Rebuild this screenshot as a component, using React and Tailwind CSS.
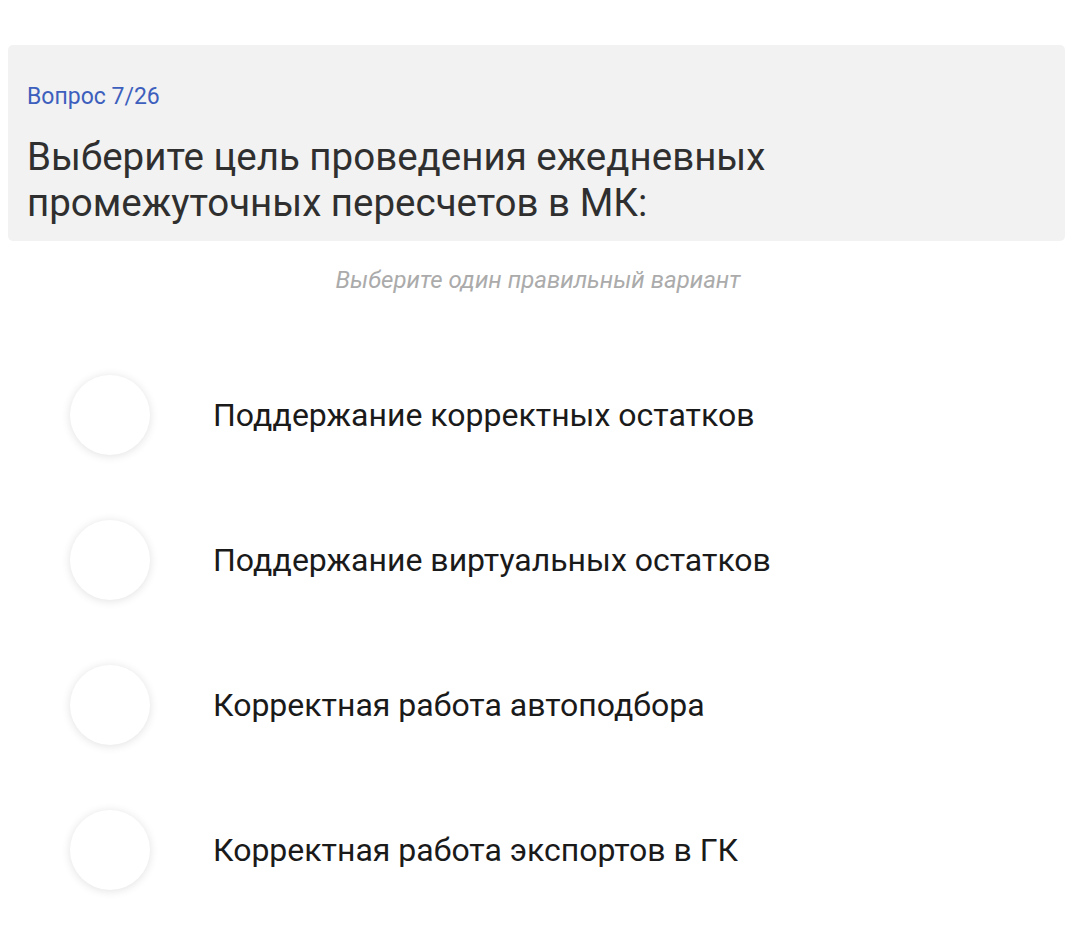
import React from "react";

const options = [
  "Поддержание корректных остатков",
  "Поддержание виртуальных остатков",
  "Корректная работа автоподбора",
  "Корректная работа экспортов в ГК",
];

export default function App() {
  return (
    <main
      className="min-h-screen bg-white pt-[45px]"
      style={{ fontFamily: "Roboto, 'Noto Sans', sans-serif" }}
    >
      {/* question header */}
      <div className="ml-[8px] mr-[11px] rounded-[5px] bg-[#f2f2f2] px-[19px] pt-[38px] pb-[15px]">
        <div className="text-[23px] leading-[28px] text-[#3d5fbd]">Вопрос 7/26</div>
        <h1 className="mt-[23px] text-[38.5px] leading-[46px] text-[#2f2f2f]">
          Выберите цель проведения ежедневных
          <br />
          промежуточных пересчетов в МК:
        </h1>
      </div>

      <p className="mt-[24px] text-center text-[24px] italic leading-[30px] text-[#ababab]">
        Выберите один правильный вариант
      </p>

      <div className="mt-[80px] flex flex-col gap-[65px] pl-[70px]">
        {options.map((o) => (
          <label key={o} className="flex items-center gap-[63px]">
            <span className="h-[80px] w-[80px] shrink-0 rounded-full bg-white shadow-[0_1px_10px_rgba(0,0,0,0.12)]" />
            <span className="text-[32px] leading-[40px] text-[#1a1a1a]">{o}</span>
          </label>
        ))}
      </div>
    </main>
  );
}
